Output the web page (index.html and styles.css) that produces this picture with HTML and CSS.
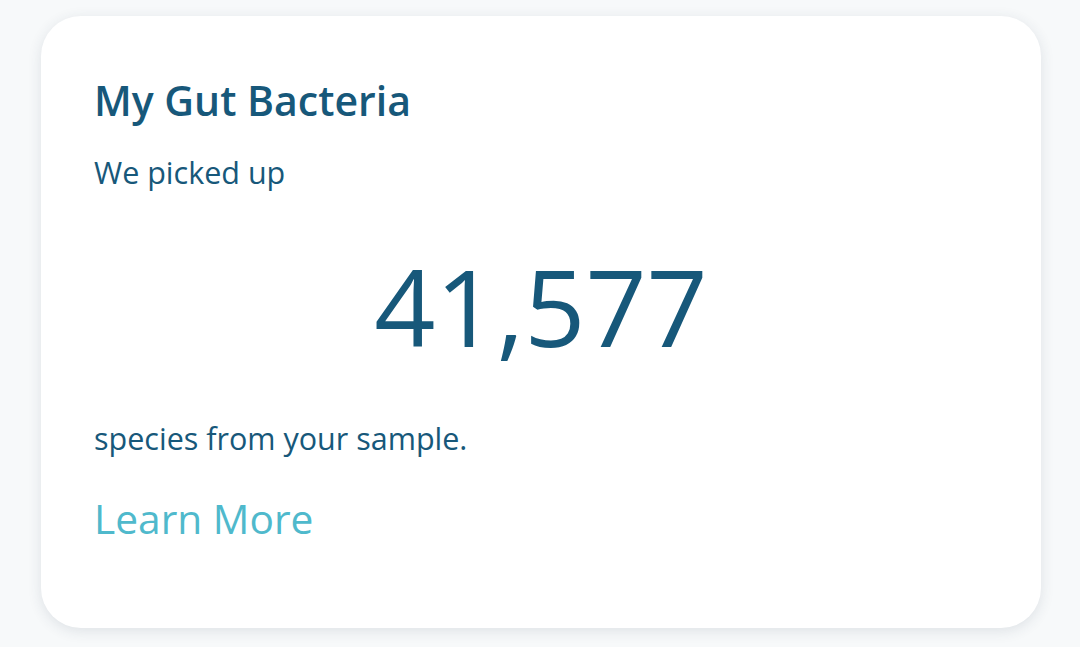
FILE: index.html
```html
<!DOCTYPE html>
<html lang="en">
<head>
<meta charset="utf-8">
<link rel="stylesheet" href="styles.css">
<title>My Gut Bacteria</title>
</head>
<body>
  <main class="card">
    <h1 class="card-title">My Gut Bacteria</h1>
    <p class="lead">We picked up</p>
    <div class="count">41,577</div>
    <p class="tail">species from your sample.</p>
    <a class="learn" href="#">Learn More</a>
  </main>
</body>
</html>
```

FILE: styles.css
```css
html, body {
  margin: 0;
  padding: 0;
}
body {
  background: #f7f9fa;
  font-family: "Open Sans", "Noto Sans", sans-serif;
  color: #17587a;
  height: 647px;
  overflow: hidden;
}
.card {
  box-sizing: border-box;
  width: 1000px;
  height: 612px;
  margin: 16px 0 0 41px;
  background: #ffffff;
  border-radius: 40px;
  box-shadow: 0 3px 14px rgba(40, 60, 80, 0.12);
  padding: 56px 53px 0 53px;
  display: flex;
  flex-direction: column;
  align-items: flex-start;
}
.card-title {
  margin: 0;
  font-size: 41px;
  font-weight: 600;
  line-height: normal;
}
.lead {
  margin: 23px 0 0 0;
  font-size: 30.5px;
  line-height: normal;
}
.count {
  align-self: center;
  margin: 40px 0 0 0;
  font-size: 107px;
  line-height: normal;
}
.tail {
  margin: 39px 0 0 0;
  font-size: 30.5px;
  line-height: normal;
}
.learn {
  margin-top: 31px;
  font-size: 40.7px;
  line-height: normal;
  color: #4fb9cc;
  text-decoration: none;
}
```
